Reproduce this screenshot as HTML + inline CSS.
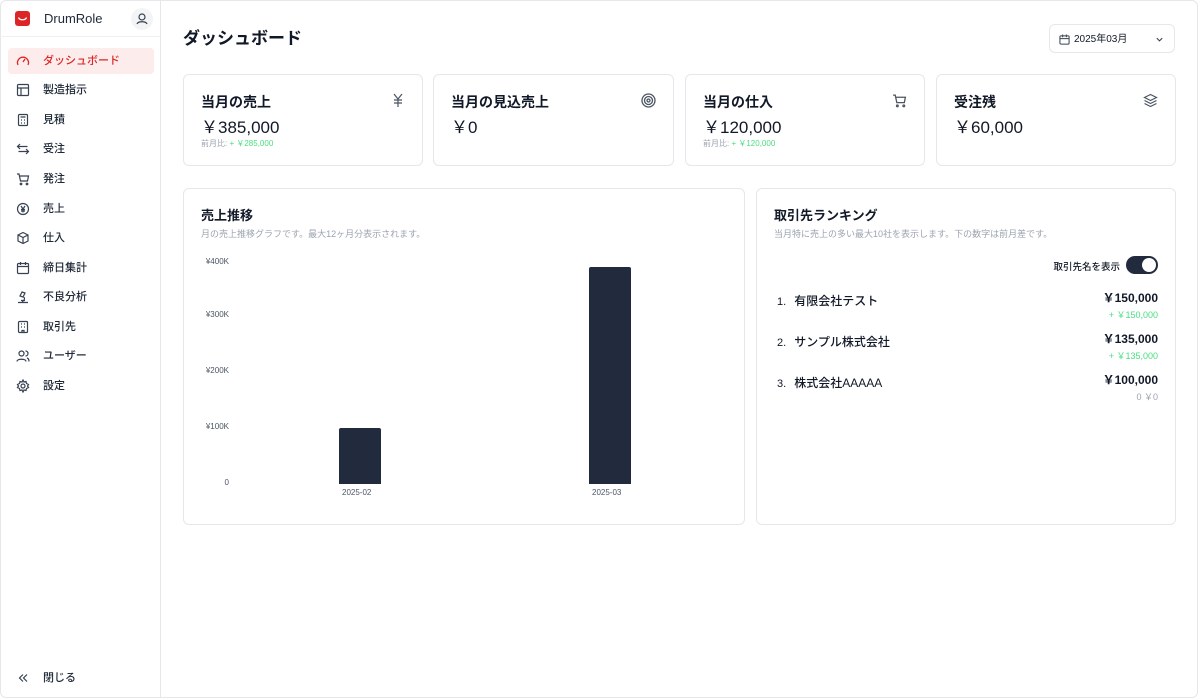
<!DOCTYPE html>
<html><head><meta charset="utf-8"><style>
*{box-sizing:border-box;margin:0;padding:0}
body{width:1200px;height:700px;overflow:hidden;background:#fff;font-family:"Liberation Sans","Noto Sans CJK JP",sans-serif;color:#111827;position:relative}
.frame{position:absolute;left:0;top:0;width:1198px;height:698px;border:1px solid #e5e7eb;border-radius:6px}
.side{position:absolute;left:0;top:0;width:161px;height:698px;border-right:1px solid #e5e7eb}
.hd{height:37px;border-bottom:1px solid #eef0f2;position:relative}
.logo{position:absolute;left:15px;top:11px;width:15px;height:15px;background:#dc2626;border-radius:3px}
.brand{position:absolute;left:44px;top:11px;font-size:13px;color:#1f2937}
.user{position:absolute;left:131px;top:8px;width:22px;height:22px;border-radius:50%;background:#f3f4f6}
.nav{position:absolute;left:8px;width:146px;height:26px;font-size:11px;color:#1f2937;line-height:26px;padding-left:35px;font-weight:500}
.nav svg{position:absolute;left:8px;top:6px}
.nav.act{background:#fdecec;color:#dc2626;border-radius:4px}
.card{position:absolute;border:1px solid #e5e7eb;border-radius:6px;background:#fff}
.ct{position:absolute;left:17px;top:20px;font-size:14px;font-weight:600;line-height:1}
.cv{position:absolute;left:17px;top:44px;font-size:17px;line-height:1}
.cs{position:absolute;left:17px;top:65px;font-size:8px;color:#9ca3af;line-height:1}
.cs b{color:#4ade80;font-weight:400}
.ci{position:absolute;right:17px;top:18px}
.ax{position:absolute;font-size:8px;color:#4b5563;text-align:right;width:40px}
.bar{position:absolute;background:#222b3e;border-radius:2px 2px 0 0}
.r{position:absolute;left:20px;font-size:12px;font-weight:500}
.r span{font-size:11px;margin-right:8px;font-weight:400}
.rv{position:absolute;right:17px;font-size:12px;font-weight:600;text-align:right}
.rv div{font-size:9px;color:#4ade80;font-weight:400;margin-top:2px}
</style></head><body>
<div class="frame"></div>
<div class="side">
<div class="hd"><div class="logo"><svg width="15" height="15" viewBox="0 0 15 15" fill="none" stroke="#fff" stroke-width="1.2"><path d="M3.5 6.5c1 3 7 3 8 0"/></svg></div><div class="brand">DrumRole</div><div class="user"><svg width="22" height="22" viewBox="0 0 22 22" fill="none" stroke="#374151" stroke-width="1.2"><circle cx="11" cy="9" r="3"/><path d="M6 16c1-3 9-3 10 0"/></svg></div></div>
<div class="nav act" style="top:48px"><svg width="14" height="14" viewBox="0 0 14 14" fill="none" stroke="#dc2626" stroke-width="1.3"><path d="M2 11a5.5 5.5 0 1 1 10 0M7 8l2-3"/></svg>ダッシュボード</div>
<div class="nav" style="top:77px"><svg width="14" height="14" viewBox="0 0 14 14" fill="none" stroke="#374151" stroke-width="1.2"><rect x="1.5" y="1.5" width="11" height="11" rx="1"/><path d="M1.5 5h11M5 5v7.5"/></svg>製造指示</div>
<div class="nav" style="top:107px"><svg width="14" height="14" viewBox="0 0 14 14" fill="none" stroke="#374151" stroke-width="1.2"><rect x="2.5" y="1.5" width="9" height="11" rx="1"/><path d="M4.5 4h5M5 7h1M8 7h1M5 10h1M8 10h1"/></svg>見積</div>
<div class="nav" style="top:136px"><svg width="14" height="14" viewBox="0 0 14 14" fill="none" stroke="#374151" stroke-width="1.2"><path d="M1.5 4.5h10M4 2L1.5 4.5 4 7M12.5 9.5h-10M10 7l2.5 2.5L10 12"/></svg>受注</div>
<div class="nav" style="top:166px"><svg width="14" height="14" viewBox="0 0 14 14" fill="none" stroke="#374151" stroke-width="1.2"><path d="M1 2h2l1.5 7h7l1-5H4"/><circle cx="5" cy="12" r=".8"/><circle cx="11" cy="12" r=".8"/></svg>発注</div>
<div class="nav" style="top:196px"><svg width="14" height="14" viewBox="0 0 14 14" fill="none" stroke="#374151" stroke-width="1.2"><circle cx="7" cy="7" r="5.5"/><path d="M5 4l2 3 2-3M7 7v3.5M5 7.5h4M5 9h4"/></svg>売上</div>
<div class="nav" style="top:225px"><svg width="14" height="14" viewBox="0 0 14 14" fill="none" stroke="#374151" stroke-width="1.2"><path d="M7 1.5l5 2.5v6L7 12.5 2 10V4zM2 4l5 2.5L12 4M7 6.5v6"/></svg>仕入</div>
<div class="nav" style="top:255px"><svg width="14" height="14" viewBox="0 0 14 14" fill="none" stroke="#374151" stroke-width="1.2"><rect x="1.5" y="2.5" width="11" height="10" rx="1"/><path d="M1.5 5.5h11M4.5 1v3M9.5 1v3"/></svg>締日集計</div>
<div class="nav" style="top:284px"><svg width="14" height="14" viewBox="0 0 14 14" fill="none" stroke="#374151" stroke-width="1.2"><path d="M2 12.5h10M5 10.5h4M6 2l3 1-2 4-3-1zM8 7a3 3 0 0 1-2 4.5"/></svg>不良分析</div>
<div class="nav" style="top:314px"><svg width="14" height="14" viewBox="0 0 14 14" fill="none" stroke="#374151" stroke-width="1.2"><rect x="2.5" y="1.5" width="9" height="11" rx="1"/><path d="M5 4h1M8 4h1M5 7h1M8 7h1M6 12.5v-2h2v2"/></svg>取引先</div>
<div class="nav" style="top:343px"><svg width="14" height="14" viewBox="0 0 14 14" fill="none" stroke="#374151" stroke-width="1.2"><circle cx="5.5" cy="4.5" r="2.5"/><path d="M1 12.5c0-3 9-3 9 0M9.5 2a2.5 2.5 0 0 1 0 5M11 9c1.5.5 2 2 2 3.5"/></svg>ユーザー</div>
<div class="nav" style="top:373px"><svg width="14" height="14" viewBox="0 0 14 14" fill="none" stroke="#374151" stroke-width="1.2"><circle cx="7" cy="7" r="2"/><path d="M7 1l1 2 2-.5.5 2 2 1-1 1.5 1 1.5-2 1-.5 2-2-.5-1 2-1-2-2 .5-.5-2-2-1 1-1.5-1-1.5 2-1 .5-2 2 .5z"/></svg>設定</div>
<div class="nav" style="top:665px"><svg width="14" height="14" viewBox="0 0 14 14" fill="none" stroke="#374151" stroke-width="1.2"><path d="M7 3.5L3.5 7 7 10.5M11 3.5L7.5 7 11 10.5"/></svg>閉じる</div>
</div>

<div style="position:absolute;left:183px;top:30px;font-size:17px;font-weight:600;line-height:1">ダッシュボード</div>
<div class="card" style="left:1049px;top:24px;width:126px;height:29px;font-size:10px;line-height:29px;padding-left:24px">2025年03月
<svg style="position:absolute;left:9px;top:9px" width="11" height="11" viewBox="0 0 12 12" fill="none" stroke="#374151" stroke-width="1.1"><rect x="1" y="2" width="10" height="9" rx="1"/><path d="M1 5h10M4 .5v3M8 .5v3"/></svg>
<svg style="position:absolute;right:10px;top:10px" width="9" height="9" viewBox="0 0 10 10" fill="none" stroke="#374151" stroke-width="1.2"><path d="M2 3.5l3 3 3-3"/></svg></div>

<div class="card" style="left:183px;top:74px;width:240px;height:92px"><div class="ct">当月の売上</div><div class="cv">￥385,000</div><div class="cs">前月比: <b>+ ￥285,000</b></div><svg class="ci" width="14" height="14" viewBox="0 0 14 14" fill="none" stroke="#4b5563" stroke-width="1.2"><path d="M3 1l4 5 4-5M7 6v8M3 7h8M3 10h8"/></svg></div>
<div class="card" style="left:433px;top:74px;width:241px;height:92px"><div class="ct">当月の見込売上</div><div class="cv">￥0</div><svg class="ci" width="15" height="15" viewBox="0 0 15 15" fill="none" stroke="#4b5563" stroke-width="1.3"><circle cx="7.5" cy="7.5" r="6.5"/><circle cx="7.5" cy="7.5" r="4"/><circle cx="7.5" cy="7.5" r="1.5"/></svg></div>
<div class="card" style="left:685px;top:74px;width:240px;height:92px"><div class="ct">当月の仕入</div><div class="cv">￥120,000</div><div class="cs">前月比: <b>+ ￥120,000</b></div><svg class="ci" width="15" height="15" viewBox="0 0 14 14" fill="none" stroke="#4b5563" stroke-width="1.2"><path d="M1 2h2l1.5 7h7l1-5H4"/><circle cx="5" cy="12" r=".8"/><circle cx="11" cy="12" r=".8"/></svg></div>
<div class="card" style="left:936px;top:74px;width:240px;height:92px"><div class="ct">受注残</div><div class="cv">￥60,000</div><svg class="ci" width="15" height="15" viewBox="0 0 15 15" fill="none" stroke="#4b5563" stroke-width="1.2"><path d="M7.5 1.5l6 3-6 3-6-3zM1.5 7.5l6 3 6-3M1.5 10.5l6 3 6-3"/></svg></div>

<div class="card" style="left:183px;top:188px;width:562px;height:337px">
<div class="ct" style="font-size:13px">売上推移</div>
<div style="position:absolute;left:17px;top:38px;font-size:9px;color:#9ca3af">月の売上推移グラフです。最大12ヶ月分表示されます。</div>
<div class="ax" style="left:5px;top:68px">¥400K</div>
<div class="ax" style="left:5px;top:121px">¥300K</div>
<div class="ax" style="left:5px;top:177px">¥200K</div>
<div class="ax" style="left:5px;top:233px">¥100K</div>
<div class="ax" style="left:5px;top:289px">0</div>
<div class="bar" style="left:155px;top:239px;width:42px;height:56px"></div>
<div class="bar" style="left:405px;top:78px;width:42px;height:217px"></div>
<div style="position:absolute;left:158px;top:299px;font-size:8px;color:#4b5563">2025-02</div>
<div style="position:absolute;left:408px;top:299px;font-size:8px;color:#4b5563">2025-03</div>
</div>

<div class="card" style="left:756px;top:188px;width:420px;height:337px">
<div class="ct" style="font-size:13px">取引先ランキング</div>
<div style="position:absolute;left:17px;top:38px;font-size:9px;color:#9ca3af">当月特に売上の多い最大10社を表示します。下の数字は前月差です。</div>
<div style="position:absolute;right:55px;top:70px;font-size:9.5px;font-weight:500">取引先名を表示</div>
<div style="position:absolute;right:17px;top:67px;width:32px;height:18px;border-radius:9px;background:#222b3e"><div style="position:absolute;right:2px;top:2px;width:14px;height:14px;border-radius:50%;background:#fff"></div></div>
<div class="r" style="top:103px"><span>1.</span>有限会社テスト</div>
<div class="rv" style="top:100px">￥150,000<div>+ ￥150,000</div></div>
<div class="r" style="top:144px"><span>2.</span>サンプル株式会社</div>
<div class="rv" style="top:141px">￥135,000<div>+ ￥135,000</div></div>
<div class="r" style="top:185px"><span>3.</span>株式会社AAAAA</div>
<div class="rv" style="top:182px">￥100,000<div style="color:#9ca3af">0 ￥0</div></div>
</div>
</body></html>
